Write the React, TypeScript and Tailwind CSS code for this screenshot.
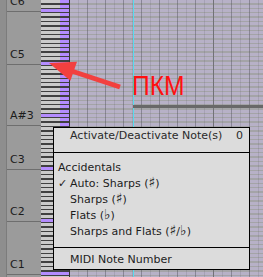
import React from 'react';

const ROWS = Array.from({ length: 66 }, (_, i) => {
  const semi = (((2 - i) % 12) + 12) % 12;
  return { i, isC: semi === 0, marked: i <= 28 };
});

const LABELS = [
  { text: 'C6', h: 'h-[13.125px]' },
  { text: 'C5', h: 'h-[52.5px]' },
  { text: 'A#3', h: 'h-[61.25px]' },
  { text: 'C3', h: 'h-[43.75px]' },
  { text: 'C2', h: 'h-[52.5px]' },
  { text: 'C1', h: 'h-[52.5px]' },
];

const KeyRow = ({ isC, marked }: { isC: boolean; marked: boolean }) => (
  <div className="flex h-[4.375px] shrink-0">
    <div className="w-[28px] flex flex-col">
      <div className="h-[1.4px] bg-[#404040]" />
      <div className={`flex-1 flex justify-end ${isC ? 'bg-[#b48cff]' : 'bg-[#cacaca]'}`}>
        {!isC && marked && <div className="w-[9px] bg-[#b48cff]" />}
      </div>
    </div>
    <div className="w-px bg-[#353535]" />
    <div className="flex-1 flex flex-col">
      <div className="h-[1.4px] bg-[#a4a4a7]" />
      <div className="flex-1 bg-[#b7b1c7]" />
    </div>
  </div>
);

const Acc = ({ children }: { children: React.ReactNode }) => (
  <span className="text-[14px] leading-none">{children}</span>
);

const MenuRow = ({ children, check }: { children: React.ReactNode; check?: boolean }) => (
  <div className="h-[16px] flex items-center pl-[4px]">
    <span className="w-[12px] text-[11px]">{check ? '✓' : ''}</span>
    <span>{children}</span>
  </div>
);

export default function App() {
  return (
    <div className="relative w-[263px] h-[277px] overflow-hidden bg-[#999999] font-['DejaVu_Sans',sans-serif] text-[11px] text-[#1c1c1c]">
      <div className="flex h-full">
        {/* left strip */}
        <div className="w-[7px] shrink-0 bg-[#8e8e8e] border-r border-[#7c7c7c]" />

        {/* octave labels */}
        <div className="w-[34px] shrink-0 flex flex-col mt-[-1.125px] bg-[#9b9b9b]">
          {LABELS.map((l) => (
            <div key={l.text} className={`${l.h} shrink-0 flex items-end pl-[3px] pb-[2px] leading-[14px] border-b border-[#6e6e6e]`}>
              {l.text}
            </div>
          ))}
        </div>

        {/* keys + grid */}
        <div className="relative flex-1 flex flex-col mt-[-1.125px]">
          {ROWS.map((r) => (
            <KeyRow key={r.i} isC={r.isC} marked={r.marked} />
          ))}
          {/* beat lines */}
          <div className="absolute inset-y-0 left-[29px] right-0 pointer-events-none bg-[repeating-linear-gradient(90deg,transparent_0_8px,rgba(80,80,90,0.16)_8px_9px)]" />
          <div className="absolute inset-y-0 left-[29px] right-0 pointer-events-none bg-[repeating-linear-gradient(90deg,transparent_0_17px,rgba(70,70,80,0.3)_17px_18px)]" />
        </div>
      </div>

      {/* bar line, playhead, note */}
      <div className="absolute top-0 bottom-0 left-[213px] w-px bg-[#727277]" />
      <div className="absolute top-0 bottom-0 left-[133px] w-px bg-[#55dcef]" />
      <div className="absolute top-[105px] left-[133px] right-0 h-[3px] bg-[#686868]" />

      {/* annotation */}
      <svg className="absolute inset-0 pointer-events-none" width="263" height="277" viewBox="0 0 263 277">
        <line x1="70" y1="70.5" x2="120" y2="87" stroke="#f2403f" strokeWidth="5" />
        <polygon points="49,63 77,61.8 70.4,80.8" fill="#f2403f" />
      </svg>
      <div className="absolute left-[132px] top-[72px] text-[28px] leading-[28px] font-['Liberation_Sans',sans-serif] text-[#ff1010] origin-left scale-x-[0.88]">
        ПКМ
      </div>

      {/* context menu */}
      <div className="absolute left-[53px] top-[127px] w-[197px] h-[143px] bg-[#dcdcdc] border border-black flex flex-col">
        <div className="h-[16px] flex items-center justify-between pl-[16px] pr-[6px] text-[#2a2a2a]">
          <span>Activate/Deactivate Note(s)</span>
          <span>0</span>
        </div>
        <div className="mt-[8px] h-px bg-black" />
        <div className="pt-[7px] pb-[7px]">
          <div className="h-[16px] flex items-center pl-[4px]">Accidentals</div>
          <MenuRow check>Auto: Sharps (<Acc>♯</Acc>)</MenuRow>
          <MenuRow>Sharps (<Acc>♯</Acc>)</MenuRow>
          <MenuRow>Flats (<Acc>♭</Acc>)</MenuRow>
          <MenuRow>Sharps and Flats (<Acc>♯</Acc>/<Acc>♭</Acc>)</MenuRow>
        </div>
        <div className="h-px bg-black" />
        <div className="pt-[4px]">
          <MenuRow>MIDI Note Number</MenuRow>
        </div>
      </div>
    </div>
  );
}
